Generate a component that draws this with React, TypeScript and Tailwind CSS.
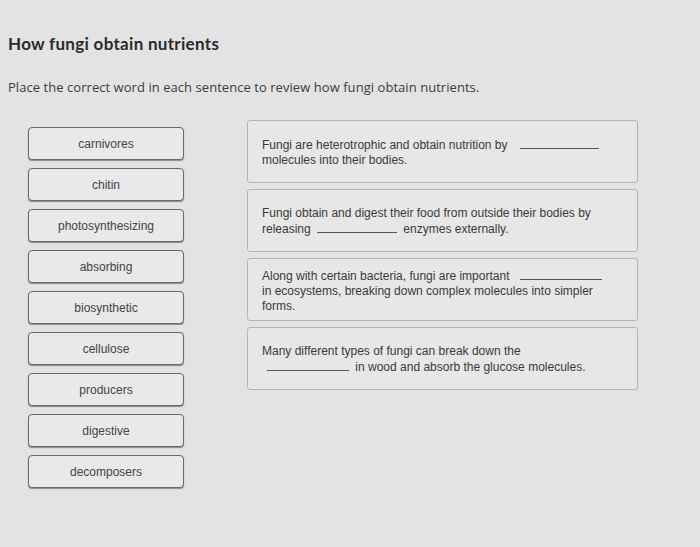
const words = [
  "carnivores",
  "chitin",
  "photosynthesizing",
  "absorbing",
  "biosynthetic",
  "cellulose",
  "producers",
  "digestive",
  "decomposers",
];

function Blank({ w = "w-[80px]" }: { w?: string }) {
  return (
    <span
      className={`inline-block ${w} h-[12px] border-b border-[#555] align-baseline`}
    />
  );
}

function SentenceBox({ children }: { children: React.ReactNode }) {
  return (
    <div className="h-[63px] rounded-[3px] border border-[#b4b6b5] bg-[#e6e7e6] px-[14px] pt-[2px] flex items-center">
      <p className="text-[12px] leading-[15px] text-[#3a3a3a]">{children}</p>
    </div>
  );
}

export default function App() {
  return (
    <div className="w-[700px] h-[547px] overflow-hidden bg-[#e2e3e2] font-['Liberation_Sans',Arial,sans-serif]">
      <div className="pt-[34px] pl-[8px]">
        <h1 className="font-['Lato',sans-serif] font-bold text-[17px] tracking-[0.3px] leading-[20px] text-[#2b2b2b]">
          How fungi obtain nutrients
        </h1>
        <p className="mt-[24px] font-['Open_Sans',sans-serif] text-[13px] tracking-[0.05px] leading-[18px] text-[#3c3c3c]">
          Place the correct word in each sentence to review how fungi obtain nutrients.
        </p>
      </div>
      <div className="flex mt-[24px] pl-[28px]">
        <div className="flex flex-col gap-[8px] w-[156px] pt-[7px]">
          {words.map((w) => (
            <div
              key={w}
              className="h-[33px] rounded-[4px] border-[1.5px] border-[#6a6a6a] bg-[#e9e9e9] shadow-[0_1px_1px_rgba(0,0,0,0.4)] flex items-center justify-center text-[12px] text-[#444]"
            >
              {w}
            </div>
          ))}
        </div>
        <div className="ml-[63px] w-[391px] flex flex-col gap-[6px]">
          <SentenceBox>
            Fungi are heterotrophic and obtain nutrition by{" "}
            <span className="ml-[9px]">
              <Blank w="w-[79px]" />
            </span>
            <br />
            molecules into their bodies.
          </SentenceBox>
          <SentenceBox>
            Fungi obtain and digest their food from outside their bodies by
            <br />
            releasing <span className="mx-[3px]"><Blank w="w-[80px]" /></span> enzymes externally.
          </SentenceBox>
          <SentenceBox>
            Along with certain bacteria, fungi are important{" "}
            <span className="ml-[7px]">
              <Blank w="w-[82px]" />
            </span>
            <br />
            in ecosystems, breaking down complex molecules into simpler
            <br />
            forms.
          </SentenceBox>
          <SentenceBox>
            Many different types of fungi can break down the
            <br />
            <span className="ml-[5px]">
              <Blank w="w-[82px]" />
            </span>{" "}
            <span className="ml-[3px]">in wood and absorb the glucose molecules.</span>
          </SentenceBox>
        </div>
      </div>
    </div>
  );
}
